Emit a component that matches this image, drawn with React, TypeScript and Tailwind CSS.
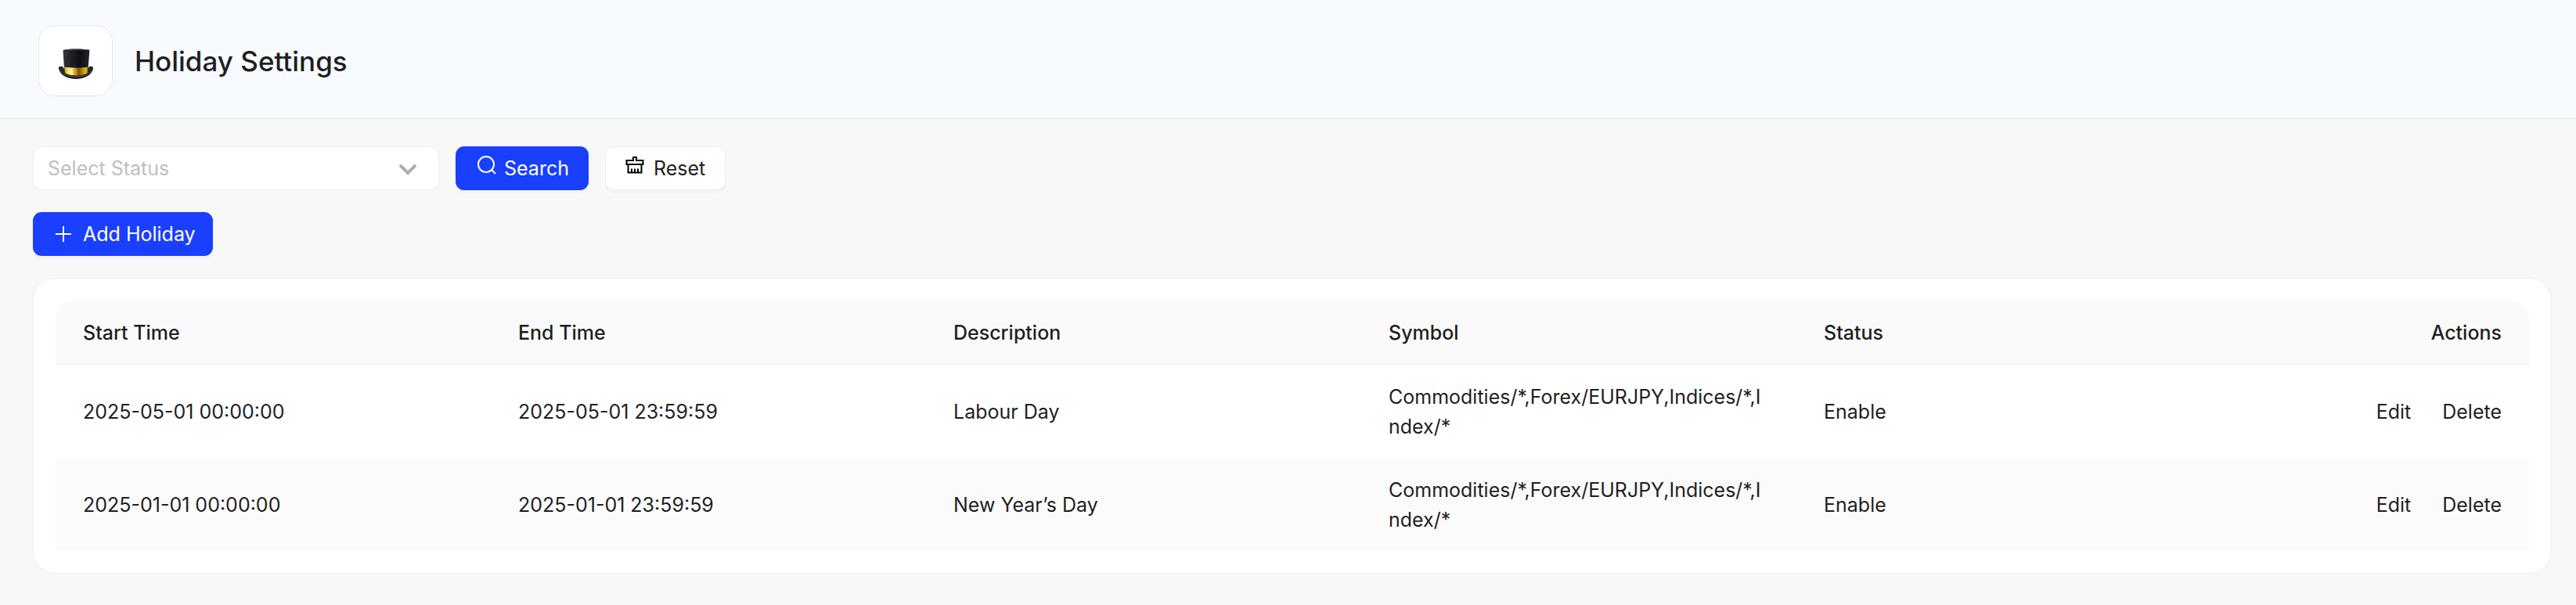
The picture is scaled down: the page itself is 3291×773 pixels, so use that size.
import { useState } from "react";

const holidays = [
  {
    id: 1,
    startTime: "2025-05-01 00:00:00",
    endTime: "2025-05-01 23:59:59",
    description: "Labour Day",
    symbol: "Commodities/*,Forex/EURJPY,Indices/*,Index/*",
    status: "Enable",
  },
  {
    id: 2,
    startTime: "2025-01-01 00:00:00",
    endTime: "2025-01-01 23:59:59",
    description: "New Year’s Day",
    symbol: "Commodities/*,Forex/EURJPY,Indices/*,Index/*",
    status: "Enable",
  },
];

function HatIcon() {
  return (
    <svg viewBox="0 0 46 40" className="w-[46px] h-[40px]" aria-hidden="true">
      <defs>
        <linearGradient id="crown" x1="0" y1="0" x2="1" y2="0">
          <stop offset="0" stopColor="#33363c" />
          <stop offset="0.3" stopColor="#1e2126" />
          <stop offset="0.65" stopColor="#0d0f15" />
          <stop offset="1" stopColor="#24262b" />
        </linearGradient>
        <linearGradient id="band" x1="0" y1="0" x2="1" y2="0">
          <stop offset="0" stopColor="#b78a10" />
          <stop offset="0.12" stopColor="#f0d650" />
          <stop offset="0.3" stopColor="#fff795" />
          <stop offset="0.5" stopColor="#c08a12" />
          <stop offset="0.62" stopColor="#7d4a00" />
          <stop offset="0.78" stopColor="#c4920c" />
          <stop offset="0.9" stopColor="#e0b31c" />
          <stop offset="1" stopColor="#9a6c08" />
        </linearGradient>
      </defs>
      <path
        d="M1 26 C0 23 3 22 6 23 C9 32 37 32 40 23 C43 22 46 23 45 26 C43 34 34 39 23 39 C12 39 3 34 1 26 Z"
        fill="#25272b"
      />
      <path d="M6.500 2 C12 0 34 0 40.500 2 L38.500 26 H8 Z" fill="url(#crown)" />
      <path d="M7.500 1.800 C15 0.800 32 0.800 39.500 1.800" fill="none" stroke="#6b6d72" strokeWidth="0.800" />
      <path d="M8 23.500 C15 25 32 25 38.500 23.500 L38 31 C32 35.500 15 35.500 9 31 Z" fill="url(#band)" />
      <path d="M4 29 C12 38 34 38 42 29" fill="none" stroke="#4a4c50" strokeWidth="1" />
    </svg>
  );
}

function SearchIcon() {
  return (
    <svg viewBox="0 0 24 24" className="w-6 h-6" fill="none" stroke="currentColor" strokeWidth="2" aria-hidden="true">
      <circle cx="11" cy="11" r="10" />
      <path d="M18 18 L23 23" />
    </svg>
  );
}

function BrushIcon() {
  return (
    <svg viewBox="0 0 24 22" className="w-6 h-[22px]" fill="none" stroke="#000" strokeWidth="2" aria-hidden="true">
      <path d="M1.500 10 V5 H10 V1 H14 V5 H22.500 V10 Z" />
      <path d="M3.500 10 V20.500 H20.500 V10" />
      <path d="M8 15.500 V20 M12 15.500 V20 M16 15.500 V20" />
    </svg>
  );
}

export default function App() {
  const [status, setStatus] = useState("");

  return (
    <div className="min-h-screen bg-[#f8f8f8] text-[25px] leading-[38px] text-[#1f1f1f] font-['Inter',sans-serif]">
      {/* Page header */}
      <header className="flex items-center gap-7 h-[152px] pt-1 pl-[49px] bg-[#f7fbff] border-b border-[#e1e5ea]">
        <div className="flex items-center justify-center w-[95px] h-[91px] pt-2 rounded-[21px] bg-white border border-[#e6e6e6]">
          <HatIcon />
        </div>
        <h1 className="text-[35px] leading-[48px] font-medium">Holiday Settings</h1>
      </header>

      <main className="pt-[35px] pl-[42px] pr-[31px] pb-10">
        {/* Filters */}
        <div className="flex gap-[21px]">
          <div className="relative w-[519px]">
            <select
              aria-label="Select Status"
              value={status}
              onChange={(e) => setStatus(e.target.value)}
              className="appearance-none w-full h-14 px-[18px] rounded-[11px] bg-white border border-[#eeeeee] text-[#bfbfbf]"
            >
              <option value="">Select Status</option>
              <option value="enable">Enable</option>
              <option value="disable">Disable</option>
            </select>
            <svg
              viewBox="0 0 24 16"
              className="absolute right-7 top-[22px] w-6 h-4 pointer-events-none"
              fill="none"
              stroke="#adadad"
              strokeWidth="4"
              aria-hidden="true"
            >
              <path d="M2 2 L12 12 L22 2" />
            </svg>
          </div>
          <button className="flex items-center gap-[10px] h-14 pl-7 pr-[25px] rounded-[11px] bg-[#1a3fff] text-white shadow-[0_4px_0_rgba(0,0,0,0.02)]">
            <span className="pb-2">
              <SearchIcon />
            </span>
            Search
          </button>
          <button className="flex items-center gap-3 h-14 px-[25px] rounded-[11px] bg-white border border-[#eeeeee] shadow-[0_4px_0_rgba(0,0,0,0.02)]">
            <span className="pb-2">
              <BrushIcon />
            </span>
            Reset
          </button>
        </div>

        <button className="flex items-center gap-[14px] h-14 pl-7 pr-[22px] mt-7 rounded-[11px] bg-[#1a3fff] text-white shadow-[0_4px_0_rgba(0,0,0,0.02)]">
          <svg viewBox="0 0 22 22" className="w-[22px] h-[22px]" stroke="currentColor" strokeWidth="2" aria-hidden="true">
            <path d="M11 1 V21 M1 11 H21" />
          </svg>
          Add Holiday
        </button>

        {/* Holiday table */}
        <section className="mt-7 p-7 rounded-[28px] bg-white border border-[#eeeeee]">
          <table className="w-full table-fixed border-separate border-spacing-0">
            <thead>
              <tr className="h-[82px] text-left *:font-medium *:px-[35px] *:bg-[#fafafa] *:border-b *:border-[#eeeeee]">
                <th scope="col" className="rounded-tl-[21px]">Start Time</th>
                <th scope="col">End Time</th>
                <th scope="col">Description</th>
                <th scope="col">Symbol</th>
                <th scope="col">Status</th>
                <th scope="col" className="w-[380px] text-right rounded-tr-[21px]">Actions</th>
              </tr>
            </thead>
            <tbody>
              {holidays.map((item) => (
                <tr key={item.id} className="h-[119px] even:bg-[#fbfbfb] *:px-[35px] *:break-all">
                  <td>{item.startTime}</td>
                  <td>{item.endTime}</td>
                  <td>{item.description}</td>
                  <td>{item.symbol}</td>
                  <td>{item.status}</td>
                  <td>
                    <div className="flex justify-end gap-10">
                      <button>Edit</button>
                      <button>Delete</button>
                    </div>
                  </td>
                </tr>
              ))}
            </tbody>
          </table>
        </section>
      </main>
    </div>
  );
}
